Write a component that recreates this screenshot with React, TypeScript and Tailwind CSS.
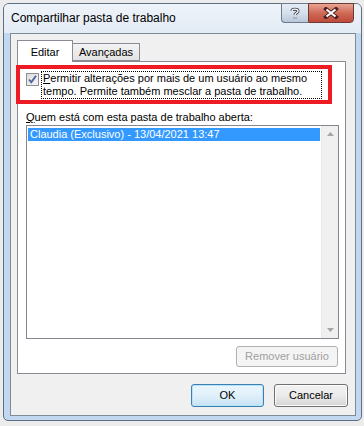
import React from "react";

const ui = "font-['Liberation_Sans',Arial,sans-serif] text-[11px] text-black";

const CheckBox: React.FC = () => (
  <div className="mt-[2px] w-[13px] h-[13px] shrink-0 border border-[#8e8f8f] bg-linear-to-br from-[#dcdcdc] to-[#f6f6f6] p-px">
    <svg viewBox="0 0 11 11" className="w-[11px] h-[11px] -mt-px -ml-px">
      <path d="M2 5.5 L4.3 8.3 L9 1.8" fill="none" stroke="#4b61a0" strokeWidth="1.8" />
    </svg>
  </div>
);

const Win7Button: React.FC<{
  label: string;
  focused?: boolean;
  disabled?: boolean;
  w: string;
  h: string;
}> = ({ label, focused, disabled, w, h }) => (
  <div
    className={`${w} ${h} rounded-[3px] border flex items-center justify-center ${
      disabled
        ? "border-[#adb2b5] bg-[#f4f4f4] text-[#a0a0a0]"
        : focused
        ? "border-[#3c7fb1] bg-linear-to-b from-[#eaf6fd] via-[#e0f0fa] to-[#c8e2f3] shadow-[inset_0_0_0_1px_#b6e3f9]"
        : "border-[#707070] bg-linear-to-b from-[#f2f2f2] via-[#ebebeb] to-[#d4d4d4] shadow-[inset_0_0_0_1px_#fcfcfc]"
    }`}
  >
    {label}
  </div>
);

export default function App() {
  return (
    <div className={`w-[364px] h-[426px] bg-[#ececec] overflow-hidden ${ui}`}>
      <div className="ml-[3px] mt-[3px] w-[359px] h-[418px] border border-[#5f6f82] rounded-t-[6px] rounded-b-[5px] bg-[#c2d8f1] flex flex-col">
        {/* title bar */}
        <div className="h-[29px] flex items-start rounded-t-[5px] bg-linear-to-b from-[#eef3f9] to-[#e3ebf5]">
          <span className="pl-[7px] pt-[7px] text-[12px] leading-[14px] text-black">
            Compartilhar pasta de trabalho
          </span>
          <div className="ml-auto mr-[7px] -mt-px flex">
            <div className="w-[27px] h-[20px] border border-[#6c7b8f] border-r-0 rounded-bl-[4px] bg-linear-to-b from-[#e4ebf4] via-[#d6e0ec] to-[#b9c8da] flex items-center justify-center">
              <svg viewBox="0 0 10 13" className="w-[10px] h-[13px]">
                <path
                  d="M2 4 C2 1.5 8 1.5 8 4 C8 6 5 6 5 8 M5 10.5 L5 11.5"
                  fill="none"
                  stroke="#3a4150"
                  strokeWidth="3"
                />
                <path
                  d="M2 4 C2 1.5 8 1.5 8 4 C8 6 5 6 5 8 M5 10.5 L5 11.5"
                  fill="none"
                  stroke="#ffffff"
                  strokeWidth="1.4"
                />
              </svg>
            </div>
            <div className="w-[46px] h-[20px] border border-[#6c3b35] rounded-br-[4px] bg-linear-to-b from-[#e8a493] via-[#cf6a57] to-[#c0493a] flex items-center justify-center">
              <svg viewBox="0 0 16 12" className="w-[16px] h-[12px]">
                <path d="M3 2 L13 10 M13 2 L3 10" stroke="#4a2220" strokeWidth="4" strokeLinecap="square" />
                <path d="M3.5 2.5 L12.5 9.5 M12.5 2.5 L3.5 9.5" stroke="#ffffff" strokeWidth="2.2" />
              </svg>
            </div>
          </div>
        </div>

        {/* client area */}
        <div className="ml-[6px] w-[346px] h-[383px] border border-[#7f8a98] bg-[#f0f0f0] flex flex-col">
          {/* tabs */}
          <div className="mt-[6px] ml-[6px] flex items-end h-[22px] relative z-10">
            <div className="w-[56px] h-[22px] border border-b-0 border-[#898c95] bg-white flex items-center justify-center pt-px">
              Editar
            </div>
            <div className="w-[67px] h-[18px] mb-px border border-l-0 border-[#898c95] bg-linear-to-b from-[#f3f3f3] to-[#e3e3e3] flex items-center justify-center">
              Avançadas
            </div>
          </div>
          <div className="-mt-px ml-[6px] w-[329px] h-[313px] border border-[#898c95] bg-white flex flex-col relative">
            {/* checkbox row */}
            <div className="mt-[9px] ml-[8px] flex items-start">
              <CheckBox />
              <div className="ml-[2px] w-[281px] border border-dotted border-black px-px leading-[13px] first-letter:underline">
                Permitir alterações por mais de um usuário ao mesmo tempo. Permite também mesclar a pasta de trabalho.
              </div>
            </div>
            {/* red annotation */}
            <div className="absolute left-[-2px] top-[3px] w-[316px] h-[39px] border-4 border-[#ed1c24]" />

            <div className="mt-[12px] ml-[8px] leading-[13px] first-letter:underline">
              Quem está com esta pasta de trabalho aberta:
            </div>
            <div className="mt-px ml-[8px] w-[313px] h-[214px] border border-[#828790] flex">
              <div className="flex-1 px-px pt-[2px]">
                <div className="h-[13px] bg-[#3399ff] text-white pl-[2px] leading-[13px]">
                  Claudia (Exclusivo) - 13/04/2021 13:47
                </div>
              </div>
              <div className="w-[17px] bg-[#f0f0f0] border-l border-[#e8e8e8] flex flex-col items-center justify-between py-[6px]">
                <svg viewBox="0 0 7 4" className="w-[7px] h-[4px]">
                  <path d="M0 4 L3.5 0 L7 4 Z" fill="#a5a5a5" />
                </svg>
                <svg viewBox="0 0 7 4" className="w-[7px] h-[4px]">
                  <path d="M0 0 L7 0 L3.5 4 Z" fill="#a5a5a5" />
                </svg>
              </div>
            </div>
            <div className="mt-[7px] self-end mr-[7px]">
              <Win7Button label="Remover usuário" disabled w="w-[102px]" h="h-[21px]" />
            </div>
          </div>

          {/* bottom buttons */}
          <div className="mt-[10px] mr-[7px] flex justify-end gap-[10px]">
            <Win7Button label="OK" focused w="w-[73px]" h="h-[23px]" />
            <Win7Button label="Cancelar" w="w-[74px]" h="h-[23px]" />
          </div>
        </div>
      </div>
    </div>
  );
}
